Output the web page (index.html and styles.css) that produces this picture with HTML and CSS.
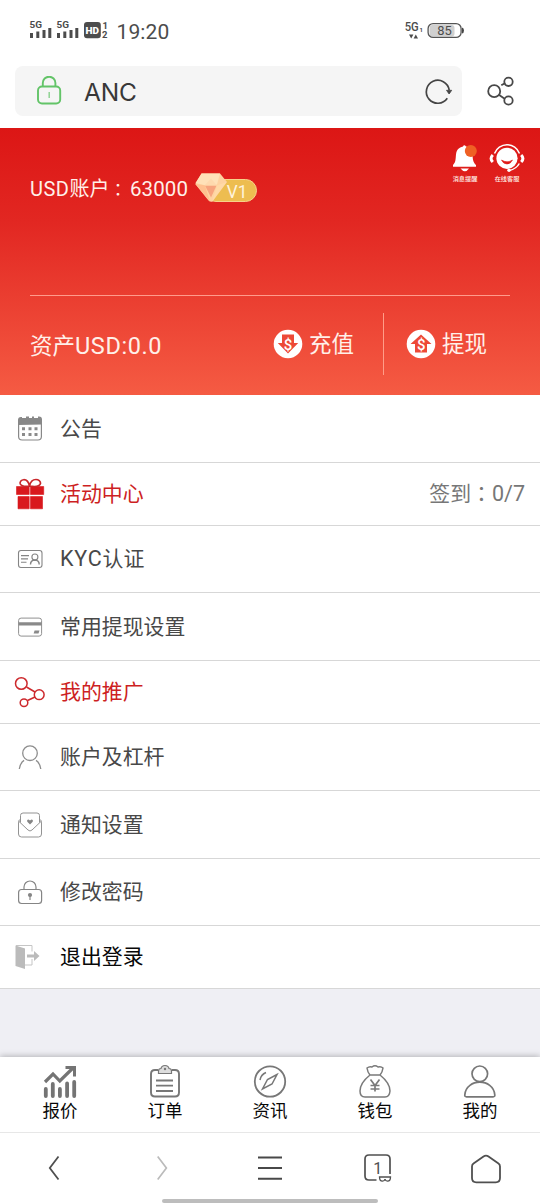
FILE: index.html
```html
<!DOCTYPE html>
<html lang="zh-CN">
<head>
<meta charset="utf-8">
<title>ANC</title>
<link rel="stylesheet" href="styles.css">
</head>
<body>
<header class="browser">
  <div class="status">
    <svg class="signals" width="80" height="22" viewBox="29 19 80 22">
      <g fill="#4c4c4c">
        <text class="net" x="29.6" y="27.500" textLength="12.5" lengthAdjust="spacingAndGlyphs">5G</text>
        <text class="net" x="56.6" y="27.500" textLength="12.5" lengthAdjust="spacingAndGlyphs">5G</text>
        <path d="M30 33h3v5h-3zM36.3 31.5h3V38h-3zM42.500 30h3v8h-3zM48.300 28h3v10h-3zM57 33h3v5h-3zM63.300 31.500h3V38h-3zM69.500 30h3v8h-3zM75.300 28h3v10h-3z"/>
        <rect x="84" y="22" width="16.800" height="16.300" rx="3"/>
        <text class="digit" x="102.500" y="28.800">1</text>
        <text class="digit" x="102" y="38.200">2</text>
      </g>
      <text class="hd" x="85.600" y="34" textLength="13.500" lengthAdjust="spacingAndGlyphs">HD</text>
    </svg>
    <span class="time">19:20</span>
    <svg class="battery" width="62" height="22" viewBox="404 19 62 22">
      <rect x="429.500" y="25" width="25" height="11.500" rx="3" fill="#d0d0d0"/>
      <rect x="428.100" y="23.600" width="33" height="13.800" rx="5" fill="none" stroke="#555" stroke-width="1.300"/>
      <path d="M462 27.500q2 .5 2 3t-2 3z" fill="#444"/>
      <g fill="#4c4c4c">
        <text class="net-right" x="404.700" y="31.300" textLength="14" lengthAdjust="spacingAndGlyphs">5G</text>
        <text class="tiny" x="419.500" y="31.500">1</text>
        <path d="M409 34.500h4.400l-2.200 4zM413.600 38.500h4.400l-2.200-4z"/>
        <text class="charge" x="437.300" y="34.900" textLength="14.500" lengthAdjust="spacingAndGlyphs">85</text>
      </g>
    </svg>
  </div>
  <div class="address-row">
    <div class="address">
      <svg width="26" height="30" viewBox="36 76 26 30" fill="none" stroke="#63c468" stroke-width="1.900">
        <rect x="38" y="86.500" width="22.200" height="17" rx="4"/><path d="M42.800 86.500V83a6.300 6.300 0 0 1 12.600 0v3.500"/><path d="M49.200 92v6" stroke-width="1.500" stroke="#8fd292"/>
      </svg>
      <span class="site">ANC</span>
      <svg width="30" height="28" viewBox="424 77 30 28" fill="none" stroke="#444" stroke-width="1.700">
        <path d="M447.300 98.300A11.500 11.500 0 1 1 449.200 90"/><path d="M446.500 90.300h5.200l-2.600 3.700z" fill="#444" stroke-width=".8"/>
      </svg>
    </div>
    <svg width="28" height="30" viewBox="487 75 28 30" fill="none" stroke="#484848" stroke-width="1.800">
      <circle cx="494.200" cy="90.200" r="6"/><circle cx="508.500" cy="80.800" r="4.200"/><circle cx="508.500" cy="99.500" r="4.200"/><path d="M501.300 84.300l4-2.400M499.200 94l5.800 4"/>
    </svg>
  </div>
</header>

<section class="hero">
  <div class="account">
    <div class="account-id"><span class="account-label"><b>USD</b>账户<i class="colon" lang="zh-TW">：</i></span><span class="account-no">63000</span></div>
    <svg class="vip" width="64" height="30" viewBox="194 173 64 30">
      <rect x="205" y="179.500" width="51.500" height="22" rx="11" fill="#edbd50" stroke="#f7d28a"/>
      <path d="M201.500 173.500h18.500l7 8.500-14.500 19.500q-2 1-4-1L195.300 184z" fill="#fed2a1"/>
      <path d="M201.500 173.500h18.500l-3 11-13 .5-8.500-2z" fill="#ffe1b8"/>
      <path d="M195.300 184l9.500 1.300 5.200 16.200z" fill="#ffc08f"/>
      <path d="M205 185.500h11.500l-5.500 12z" fill="#f7a47e"/><path d="M204.500 185.500h12.500l-6-7z" fill="#fed9ae"/>
      <path d="M217 185.500l9.500-3.500-14.500 19.500z" fill="#ffd9a7"/>
      <text class="vip-text" x="226.800" y="197.500" textLength="20.500" lengthAdjust="spacingAndGlyphs">V1</text>
    </svg>
    <div class="service">
      <div class="service-item">
        <svg width="28" height="30" viewBox="451 143 28 30">
          <path d="M463 146.500q1-2.500 3 0c5 1 6.200 4 6.500 8 .3 5 .5 7.500 3.500 10.500v1.800h-23V165c3-3 2.500-6.500 3-10.500.6-5 3-7 7-8z" fill="#fff"/><path d="M460.500 168.500h8.500q-4 5.500-8.500 0z" fill="#fff"/><circle cx="470.800" cy="151" r="6" fill="#ef6024"/>
        </svg>
        <span>消息提醒</span>
      </div>
      <div class="service-item">
        <svg width="36" height="30" viewBox="490 143 36 30">
          <circle cx="508" cy="158.300" r="10.600" fill="#fff"/>
          <g fill="none" stroke="#fff"><path d="M495.500 153.500A13.300 13.300 0 0 1 520.500 153.500M520.300 163.500q-3 5.500-10 7" stroke-width="1.500"/><path d="M493.800 155q-3.500 3.500 0 7M522.200 155q3.500 3.500 0 7" stroke-width="3"/></g>
          <circle cx="510" cy="170.300" r="1.700" fill="#fff"/><path d="M502.500 160q5.500 3.500 11 0-1.800 4-5.500 4t-5.500-4z" fill="#df1b19" stroke="#df1b19" stroke-width=".6"/>
        </svg>
        <span>在线客服</span>
      </div>
    </div>
  </div>
  <div class="funds">
    <div class="assets">资产<span>USD:0.0</span></div>
    <div class="action recharge">
      <svg width="30" height="30" viewBox="273 329 30 30"><circle cx="288" cy="344" r="14.300" fill="#fff"/><path d="M282 334.500h12v8.500h4.200L288 353.500 277.800 343h4.200z" fill="#ed4937"/><text class="coin" x="288" y="349.500" text-anchor="middle">$</text></svg>
      <span>充值</span>
    </div>
    <div class="action withdraw">
      <svg width="30" height="30" viewBox="406 329 30 30"><circle cx="421" cy="344" r="14.300" fill="#fff"/><path d="M421 334.500l10.500 9.500H427v8.500h-12V344h-4.500z" fill="#ed4937"/><text class="coin" x="421.300" y="350" text-anchor="middle">$</text></svg>
      <span>提现</span>
    </div>
  </div>
</section>

<main class="menu">
  <div class="row row-first">
    <svg class="icon" viewBox="14 413 32 32"><rect x="18.600" y="418.500" width="22.800" height="21.500" rx="3.500" fill="none" stroke="#888" stroke-width="1.200"/><path d="M18 425v-5q0-3 3-3h1v2h4v-2.500h3v2h3v-2h2v2h4v-2h1q3 0 3 3v5z" fill="#888"/><path d="M22 427.200h3v3h-3zM28.500 427.200h3v3h-3zM34.500 427.200h3v3h-3zM22 433h3v3h-3zM28.500 433h3v3h-3zM34.500 433h3v3h-3z" fill="#8b8b8b"/></svg>
    <span>公告</span>
  </div>
  <div class="row accent short">
    <svg class="icon" viewBox="14 478 32 32"><path d="M16.500 486.500h12.700v8H16.500zM30.500 486.500h13.200v8H30.500zM18 496.500h11.200v12.300H18zM30.500 496.500h12v12.300h-12z" fill="#d9181d" stroke="#d9181d" stroke-width=".6"/><path d="M29.500 486q-7.500 1-9.300-2.200c-1.200-4.300 7.300-7.300 9.300 2.200 2-9.500 11.500-7 11-2.500-1 3.500-5 3.500-11 2.500" fill="none" stroke="#c9272b" stroke-width="1.700"/></svg>
    <span>活动中心</span><span class="signin">签到<i class="colon" lang="zh-TW">：</i><b>0/7</b></span>
  </div>
  <div class="row">
    <svg class="icon" viewBox="14 543 32 32" fill="none" stroke="#858585" stroke-width="1.100"><rect x="18.500" y="550.500" width="23.500" height="17" rx="2.500"/><path d="M21 555.600h8M21 558.900h7M21 562.300h5.500"/><circle cx="34.900" cy="557" r="3"/><path d="M30.500 564.500q0-4.200 4.400-4.500 4.300.3 4.300 4.500" stroke-width="1.400"/></svg>
    <span><b class="kyc">KYC</b>认证</span>
  </div>
  <div class="row tall">
    <svg class="icon" viewBox="14 610.500 32 32"><rect x="18.600" y="617.600" width="23" height="18" rx="2.500" fill="none" stroke="#919191"/><path d="M18.500 621.800h23.200v3.200H18.500zM34.600 630h4.900l-1 3h-4.900z" fill="#8a8a8a"/></svg>
    <span>常用提现设置</span>
  </div>
  <div class="row accent short">
    <svg class="icon" viewBox="14 676 32 32" fill="none" stroke="#cd292d" stroke-width="1.500"><circle cx="21.300" cy="683.500" r="5.800"/><circle cx="39.200" cy="694.700" r="4.900"/><circle cx="24" cy="702.700" r="3.800"/><path d="M26.500 687l8.500 5M27.500 700.500l7.500-3.500"/></svg>
    <span>我的推广</span>
  </div>
  <div class="row">
    <svg class="icon" viewBox="14 741 32 32" fill="none" stroke="#8d8d8d" stroke-width="1.300"><circle cx="30" cy="753.200" r="7.300"/><path d="M19.300 769q.8-6 4.800-8.600M36 760.400q4 2.600 4.800 8.600"/></svg>
    <span>账户及杠杆</span>
  </div>
  <div class="row tall">
    <svg class="icon" viewBox="14 808.500 32 32" fill="none" stroke="#939393"><path d="M20.500 822v-7q0-2.500 2.500-2.500h14q2.500 0 2.500 2.500v7"/><path d="M20.500 818.500q-2 1.500-2 4v11q0 3 3 3h17q3 0 3-3v-11q0-2.500-2-4M18.500 820.500l9.500 9q2 2 4 0l9.500-9"/><path d="M30 824l-2.700-2.700q-.7-2.300 1.300-2.300l1.400 1 1.400-1q2 0 1.300 2.300z" fill="#858585" stroke="none"/></svg>
    <span>通知设置</span>
  </div>
  <div class="row">
    <svg class="icon" viewBox="14 876 32 32" fill="none" stroke="#858585" stroke-width="1.200"><rect x="18.600" y="889.500" width="23" height="14" rx="3"/><path d="M24 889v-2a6 6 0 0 1 12 0v2"/><circle cx="30" cy="895" r="2.100" fill="#858585" stroke="none"/><path d="M30 895v5"/></svg>
    <span>修改密码</span>
  </div>
  <div class="row logout">
    <svg class="icon" viewBox="14 941 32 32"><path d="M15.500 945.500l9.500 3V969l-9.500-3z" fill="#bbb"/><path d="M16 945.500h16v6M32 959v6h-7" fill="none" stroke="#c5c5c5"/><path d="M27 954.500h7V951l5.500 5-5.500 5v-3.500h-7z" fill="#bbb"/></svg>
    <span>退出登录</span>
  </div>
</main>

<nav class="tabs">
  <div class="tab"><svg viewBox="42 1062 36 38" fill="none" stroke="#747474" stroke-width="3.800"><g stroke-linecap="round"><path d="M45.800 1089v7M52.800 1084v12M59.900 1089v7M67.100 1083.500v12.500M74.200 1082v14"/></g><path d="M45 1082l8-8 6.800 7L73 1068" stroke-width="3.200"/><path d="M65.500 1067.500h9v9" stroke-width="3"/></svg><span>报价</span></div>
  <div class="tab"><svg viewBox="147 1062 36 38" fill="none" stroke="#777" stroke-width="1.900"><path d="M158 1070h-3q-4 0-4 4v18.500q0 4 4 4h20q4 0 4-4V1074q0-4-4-4h-3"/><path d="M156 1080.500h17M156 1085.600h17M156 1091h17"/><path d="M158.500 1073.500h13v-2.500q0-2.500-2.500-2.500-.5-3-4-3t-4 3q-2.500 0-2.500 2.500z" fill="#ddd" stroke-width="1.200"/><circle cx="165" cy="1069" r="1.200" fill="#777" stroke="none"/></svg><span>订单</span></div>
  <div class="tab"><svg viewBox="252 1062 36 38" fill="none" stroke="#777" stroke-width="1.800"><circle cx="270" cy="1081.500" r="15.200"/><path d="M277 1074.500l-9.500 5-5 9.500 9.500-5zM260 1080q1-5.500 6-7.500" stroke-width="1.500"/></svg><span>资讯</span></div>
  <div class="tab"><svg viewBox="357 1062 36 38" fill="none" stroke="#7a7a7a" stroke-width="1.500"><path d="M370 1075q-2.500-3-3-7 2.500-2 5-1 3-2.500 6 0 3-1 5 1-.5 4-3 7 10 8 10 16-.5 6-5 6h-20q-5 0-5-6 0-8 10-16M370 1075h10"/><path d="M370.500 1079.500l4.500 6 4.500-6M375 1085v6.500M370.500 1085.500h9M370.500 1089h9" stroke-width="1.700"/></svg><span>钱包</span></div>
  <div class="tab"><svg viewBox="462 1062 36 38" fill="none" stroke="#777" stroke-width="1.700"><circle cx="479.800" cy="1073.800" r="7.800"/><path d="M466.500 1096.800q-2 0-1.700-2c1.500-16.800 28.500-16.800 30 0q.3 2-1.700 2z"/></svg><span>我的</span></div>
</nav>

<footer class="toolbar">
  <div class="tools">
    <svg viewBox="34 1148 40 40" fill="none" stroke="#4f4f4f" stroke-width="1.800"><path d="M58.500 1156.500l-8.700 11.500 8.700 11.500"/></svg>
    <svg viewBox="142 1148 40 40" fill="none" stroke="#bbb" stroke-width="1.700"><path d="M157.700 1156.500l8.700 11.500-8.700 11.500"/></svg>
    <svg viewBox="250 1148 40 40" fill="none" stroke="#484848" stroke-width="1.900"><path d="M258 1157.500h24M258 1168h24M258 1178.700h24"/></svg>
    <svg viewBox="358 1148 40 40" fill="none" stroke="#505050" stroke-width="1.700"><path d="M376.500 1180H369q-4 0-4-4v-17q0-4 4-4h17q4 0 4 4v15"/><text class="tab-count" x="377.700" y="1174" text-anchor="middle">1</text><path d="M379.500 1177h11q0 4.200-3 4.200-2 0-2.500-2-.5 2-2.500 2-3 0-3-4.200z" stroke-width="1.300"/></svg>
    <svg viewBox="466 1148 40 40" fill="none" stroke="#505050" stroke-width="1.800"><path d="M473.500 1163.500l10-7q2.500-1.800 5 0l10 7q1.500 1 1.500 3V1178q0 4.300-4.300 4.300h-19.400q-4.300 0-4.300-4.300v-11.500q0-2 1.500-3z"/></svg>
  </div>
  <div class="handle"></div>
</footer>
</body>
</html>
```
FILE: styles.css
```css
* { box-sizing: border-box; }
body { margin: 0; width: 540px; height: 1204px; overflow: hidden; display: flex; flex-direction: column; background: #efeff4; font-family: Roboto, "Noto Sans CJK SC", sans-serif; font-size: 20.9px; color: #484848; }
svg { display: block; flex: none; }
b { font-weight: 400; }
.browser { height: 128px; flex: none; background: #fff; }
.status { height: 66px; padding: 19px 74px 0 29px; display: flex; align-items: flex-start; }
.time { margin-left: 7.500px; line-height: 26px; font-size: 21px; color: #4c4c4c; letter-spacing: .1px; }
.battery { margin-left: auto; }
.net { font: 700 9px Roboto, sans-serif; }
.digit { font: 700 9.500px Roboto, sans-serif; }
.hd { font: 900 9.500px Roboto, sans-serif; fill: #fff; }
.net-right { font: 500 12px Roboto, sans-serif; }
.tiny { font: 700 6px Roboto, sans-serif; }
.charge { font: 400 12.500px Roboto, sans-serif; }
.address-row { display: flex; align-items: center; gap: 25px; padding-left: 15px; }
.address { width: 447px; height: 50px; border-radius: 8px; background: #f5f5f5; display: flex; align-items: center; padding: 0 8px 0 21px; }
.site { flex: 1; margin-left: 22px; padding-top: 2px; font: 400 24.500px Inter, sans-serif; letter-spacing: -.2px; color: #383838; }
.hero { height: 267px; flex: none; padding: 0 30px; background: linear-gradient(#dc1615, #e22722 35%, #f55b43); color: #fff0e9; }
.account { height: 168px; border-bottom: 1px solid #ff9b8c; display: flex; }
.account-id { display: flex; width: 164px; padding-top: 48px; line-height: 26px; font-size: 20px; }
.account-label { width: 100px; white-space: nowrap; }
.account-label b { letter-spacing: .5px; }
.colon { font-style: normal; font-family: "Noto Sans CJK TC", sans-serif; line-height: 1; }
.account-label .colon { font-size: 17px; }
.account-no { font-size: 20.500px; letter-spacing: .1px; }
.vip { margin-top: 45px; }
.vip-text { font: 400 18px Roboto, sans-serif; fill: #fff3dc; }
.service { margin: 15px -15px 0 auto; display: flex; gap: 10px; }
.service-item { display: flex; flex-direction: column; align-items: center; font-size: 6.200px; line-height: 9px; gap: 2px; white-space: nowrap; font-weight: 500; }
.funds { display: flex; height: 99px; }
.assets { width: 243px; padding-top: 33px; line-height: 34px; font-size: 22.500px; }
.assets span { font-size: 23.500px; letter-spacing: .6px; }
.action { display: flex; align-items: center; gap: 6px; font-size: 22.500px; line-height: 30px; height: 62px; margin-top: 17px; }
.coin { font: 500 15px Roboto, sans-serif; fill: #fff; }
.recharge { width: 111px; border-right: 1px solid #ff9d88; }
.withdraw { padding-left: 22px; }
.menu { flex: none; }
.row { height: 67px; border-bottom: 1px solid #d7d7d7; background: #fff; display: flex; align-items: center; padding: 0 15px 0 14px; line-height: 30px; }
.row > span { padding-top: 0; }
.row b { font-size: 21.500px; }
.row .kyc { letter-spacing: .8px; }
.row-first, .tall { height: 68px; }
.short { height: 63px; }
.icon { width: 32px; height: 32px; margin-right: 14px; }
.accent { color: #cd1f23; }
.logout { height: 63px; color: #080808; }
.signin { margin-left: auto; color: #777; }
.tabs { margin-top: auto; height: 76px; flex: none; display: flex; justify-content: center; gap: 69px; padding-top: 5px; background: #fff; box-shadow: 0 -1px 6px rgba(0,0,0,.25); border-bottom: 1px solid #e7e7e7; }
.tab { width: 36px; display: flex; flex-direction: column; align-items: center; font-size: 17.500px; line-height: 22px; color: #080808; }
.tab svg { width: 36px; height: 38px; }
.toolbar { height: 71px; flex: none; background: #fff; }
.tools { display: flex; justify-content: space-between; padding: 15px 34px 0; }
.tools svg { width: 40px; height: 40px; }
.tab-count { font: 400 16px Roboto, sans-serif; fill: #505050; stroke: none; }
.handle { width: 216px; height: 4px; border-radius: 2px; background: #bdbdbd; margin: 11px auto 0; }
```
